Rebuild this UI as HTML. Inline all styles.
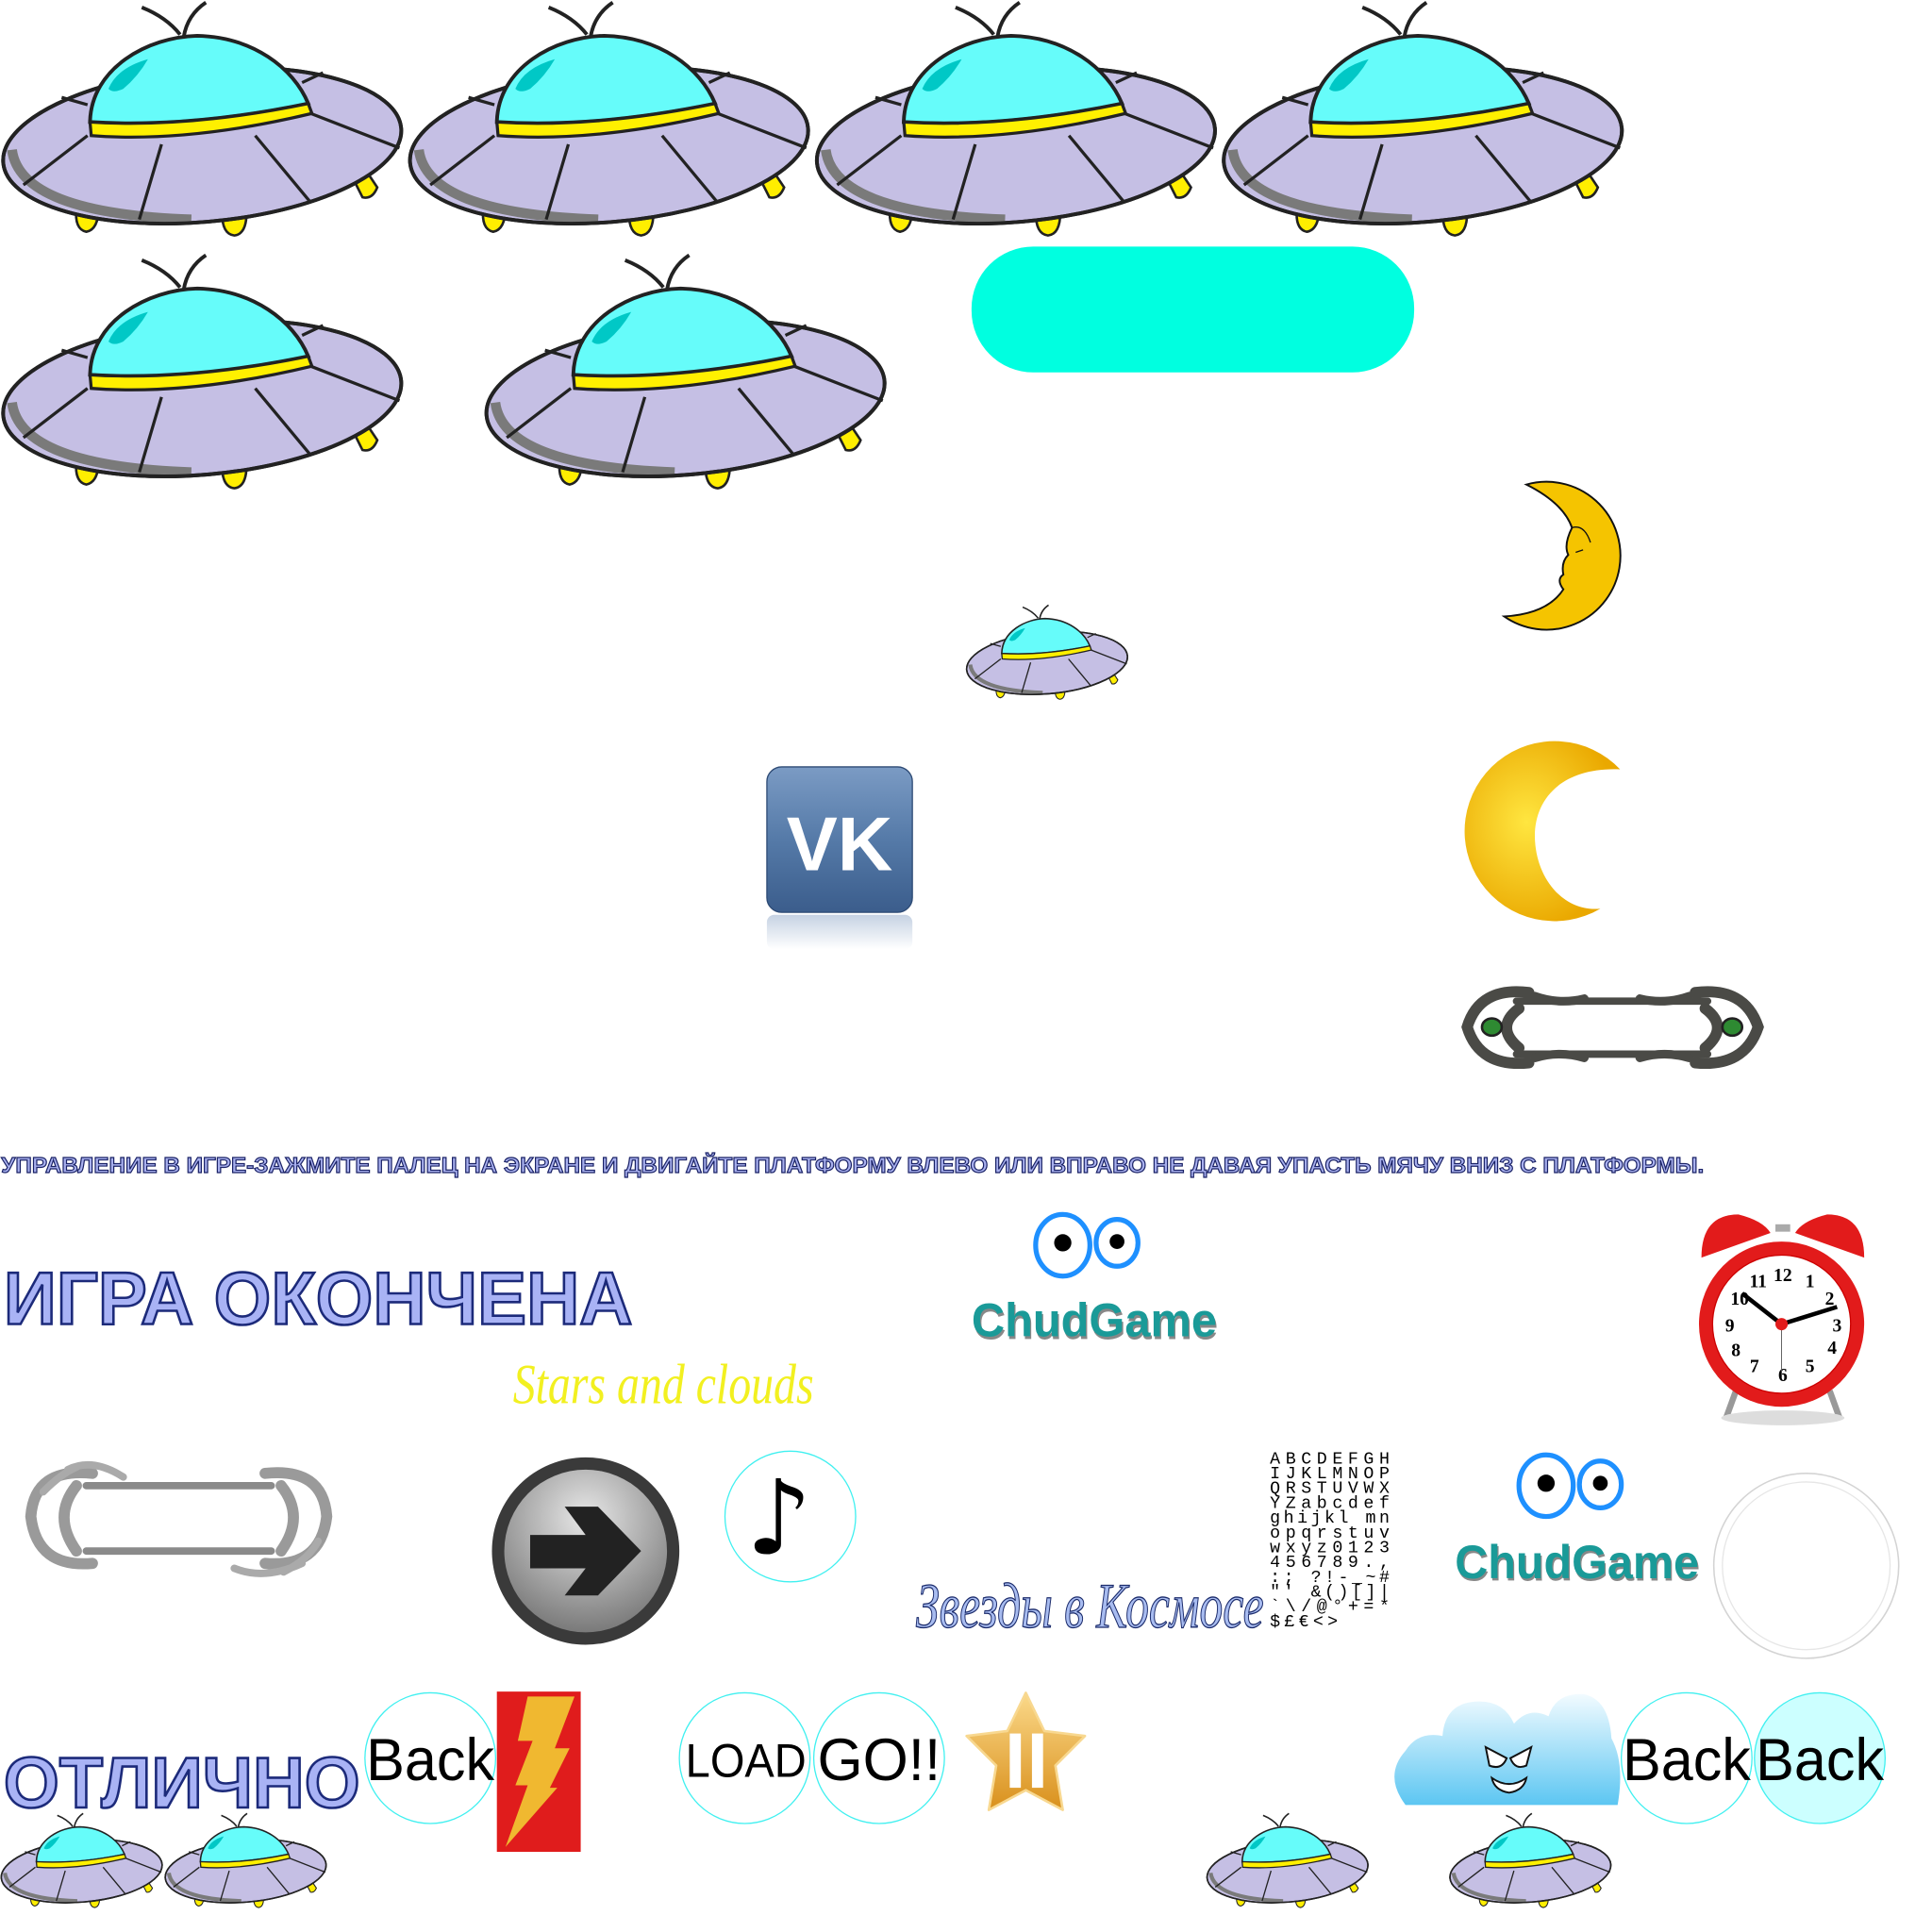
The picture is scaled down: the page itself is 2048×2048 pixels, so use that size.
<!DOCTYPE html>
<html><head><meta charset="utf-8"><style>
html,body{margin:0;padding:0;background:#fff;width:2048px;height:2048px;overflow:hidden}
svg{display:block}
</style></head><body>
<svg width="2048" height="2048" viewBox="0 0 1567 1567" xmlns="http://www.w3.org/2000/svg">
<defs>
<g id="ufo">
 <path d="M115,6 Q135,14 146,28" fill="none" stroke="#222" stroke-width="3"/>
 <path d="M167,2 Q152,12 149,30" fill="none" stroke="#222" stroke-width="3"/>
 <path d="M288,148 L298,140 L306,152 Q302,162 294,160 Z" fill="#ffee00" stroke="#222" stroke-width="2"/>
 <path d="M62,168 L80,168 Q80,186 70,188 Q60,186 62,168 Z" fill="#ffee00" stroke="#222" stroke-width="2"/>
 <path d="M180,172 L200,172 Q200,190 190,191 Q180,190 180,172 Z" fill="#ffee00" stroke="#222" stroke-width="2"/>
 <g transform="rotate(-5 164 118)">
  <ellipse cx="164" cy="118" rx="162" ry="62" fill="#c5bfe4" stroke="#222" stroke-width="3"/>
  <path d="M10,108 Q12,160 150,177" fill="none" stroke="#7a7a7a" stroke-width="8"/>
  <ellipse cx="164" cy="118" rx="162" ry="62" fill="none" stroke="#222" stroke-width="3"/>
 </g>
 <path d="M71,110 L19,150 M131,117 L113,178 M207,110 L251,163 M252,92 L324,120 M50,79 L71,85 M245,67 L262,59" stroke="#222" stroke-width="2.5" fill="none"/>
 <path d="M73,99 C74,55 120,30 160,29 C205,30 238,55 250,84 Q153,104 73,99 Z" fill="#66fcfa" stroke="#222" stroke-width="3"/>
 <path d="M88,72 Q95,55 120,48 Q112,62 100,72 Q92,76 88,72 Z" fill="#00c8c6"/>
 <path d="M73,99 Q153,104 250,84 L253,92 Q153,116 74,110 Z" fill="#fff000" stroke="#222" stroke-width="2.5"/>
</g>
<linearGradient id="vk" x1="0" y1="0" x2="0" y2="1"><stop offset="0" stop-color="#7b9bc4"/><stop offset="0.5" stop-color="#557aa8"/><stop offset="1" stop-color="#3b5d8c"/></linearGradient>
<linearGradient id="vkr" x1="0" y1="0" x2="0" y2="1"><stop offset="0" stop-color="#9fb4d0"/><stop offset="1" stop-color="#fff"/></linearGradient>
<radialGradient id="moon" cx="0.4" cy="0.45" r="0.6"><stop offset="0" stop-color="#ffe640"/><stop offset="1" stop-color="#eaa800"/></radialGradient>
<radialGradient id="btn" cx="0.5" cy="0.3" r="0.7"><stop offset="0" stop-color="#e8e8e8"/><stop offset="1" stop-color="#7a7a7a"/></radialGradient>
<linearGradient id="cloud" x1="0" y1="0" x2="0" y2="1"><stop offset="0" stop-color="#f2fbff"/><stop offset="1" stop-color="#5cc6f2"/></linearGradient>
<linearGradient id="star" x1="0" y1="0" x2="0" y2="1"><stop offset="0" stop-color="#fbd98a"/><stop offset="1" stop-color="#d9901c"/></linearGradient>
</defs>

<use href="#ufo" x="0" y="0"/>
<use href="#ufo" x="330" y="0"/>
<use href="#ufo" x="660" y="0"/>
<use href="#ufo" x="990" y="0"/>
<use href="#ufo" x="0" y="205"/>
<use href="#ufo" x="392" y="205"/>
<use href="#ufo" transform="translate(783,490) scale(0.404)"/>
<use href="#ufo" transform="translate(0,1470) scale(0.404)"/>
<use href="#ufo" transform="translate(133,1470) scale(0.404)"/>
<use href="#ufo" transform="translate(978,1470) scale(0.404)"/>
<use href="#ufo" transform="translate(1175,1470) scale(0.404)"/>

<rect x="788" y="200" width="359" height="102" rx="50" fill="#00ffe0"/>

<!-- moon with face -->
<path d="M1238,393 A60,60 0 1 1 1220,500 Q1255,498 1268,478 Q1262,470 1268,466 Q1266,456 1272,450 Q1268,442 1275,428 Q1268,408 1238,393 Z" fill="#f5c400" stroke="#111" stroke-width="1.5"/>
<path d="M1275,428 Q1285,425 1290,440 M1278,448 L1284,446" fill="none" stroke="#111" stroke-width="1"/>

<!-- moon 2 -->
<path d="M1314,624 A73,73 0 1 0 1298,737 C1270,740 1247,715 1245,682 C1243,650 1265,622 1314,624 Z" fill="url(#moon)"/>

<!-- VK -->
<rect x="622" y="622" width="118" height="118" rx="12" fill="url(#vk)" stroke="#2d4a74" stroke-width="1"/>
<rect x="622" y="742" width="118" height="28" rx="6" fill="url(#vkr)" opacity="0.6"/>
<text x="681" y="706" font-family="Liberation Sans, sans-serif" font-weight="bold" font-size="62" fill="#fff" text-anchor="middle">VK</text>

<!-- dark frame -->
<g fill="none" stroke="#4a4a46" stroke-width="9" stroke-linecap="round">
 <path d="M1230,812 L1385,812 M1230,855 L1385,855" stroke-width="6"/>
 <path d="M1240,805 Q1200,800 1190,833 Q1200,866 1240,862 M1232,818 Q1212,833 1232,850"/>
 <path d="M1375,805 Q1415,800 1426,833 Q1415,866 1375,862 M1383,818 Q1403,833 1383,850"/>
 <path d="M1245,808 Q1265,815 1285,810 M1245,858 Q1265,852 1285,858 M1330,810 Q1350,815 1370,808 M1330,858 Q1350,852 1370,858" stroke-width="7"/>
</g>
<ellipse cx="1210" cy="833" rx="8" ry="7" fill="#2e8a32" stroke="#222" stroke-width="2"/>
<ellipse cx="1405" cy="833" rx="8" ry="7" fill="#2e8a32" stroke="#222" stroke-width="2"/>

<!-- instruction line -->
<text x="1" y="951" font-family="Liberation Sans, sans-serif" font-weight="bold" font-size="18" fill="#a8b0ee" stroke="#1a2266" stroke-width="0.9" textLength="1381" lengthAdjust="spacingAndGlyphs">УПРАВЛЕНИЕ В ИГРЕ-ЗАЖМИТЕ ПАЛЕЦ НА ЭКРАНЕ И ДВИГАЙТЕ ПЛАТФОРМУ ВЛЕВО ИЛИ ВПРАВО НЕ ДАВАЯ УПАСТЬ МЯЧУ ВНИЗ С ПЛАТФОРМЫ.</text>

<text x="3" y="1074" font-family="Liberation Sans, sans-serif" font-weight="bold" font-size="60" fill="#a9b3f5" stroke="#1c2a7a" stroke-width="2" textLength="510" lengthAdjust="spacingAndGlyphs">ИГРА ОКОНЧЕНА</text>

<!-- eyes 1 -->
<ellipse cx="862" cy="1010" rx="22" ry="25" fill="#fff" stroke="#1e90ff" stroke-width="4"/>
<ellipse cx="906" cy="1008" rx="17" ry="19" fill="#fff" stroke="#1e90ff" stroke-width="4"/>
<circle cx="862" cy="1008" r="7" fill="#000"/><circle cx="906" cy="1007" r="6" fill="#000"/>
<text x="789" y="1086" font-family="Liberation Sans, sans-serif" font-weight="bold" font-size="38" fill="#888" textLength="199" lengthAdjust="spacingAndGlyphs">ChudGame</text>
<text x="788" y="1084" font-family="Liberation Sans, sans-serif" font-weight="bold" font-size="38" fill="#1a9a98" textLength="199" lengthAdjust="spacingAndGlyphs">ChudGame</text>

<!-- clock -->
<path d="M1400,1150 L1408,1128 M1492,1150 L1484,1128" stroke="#999" stroke-width="5"/>
<ellipse cx="1446" cy="1150" rx="50" ry="6" fill="#ddd"/>
<path d="M1380,1020 Q1380,985 1410,985 Q1430,990 1436,1000 Z" fill="#e21b1b"/>
<path d="M1512,1020 Q1512,985 1482,985 Q1462,990 1456,1000 Z" fill="#e21b1b"/>
<rect x="1440" y="993" width="12" height="6" fill="#aaa"/>
<circle cx="1445" cy="1074" r="67" fill="#e21b1b"/>
<circle cx="1445" cy="1074" r="56" fill="#fff" stroke="#c00" stroke-width="1"/>
<g font-family="Liberation Serif, serif" font-weight="bold" font-size="15" fill="#000" text-anchor="middle">
<text x="1446" y="1039">12</text><text x="1426" y="1044">11</text><text x="1468" y="1044">1</text>
<text x="1411" y="1058">10</text><text x="1484" y="1058">2</text><text x="1403" y="1080">9</text><text x="1490" y="1080">3</text>
<text x="1408" y="1100">8</text><text x="1486" y="1098">4</text><text x="1423" y="1113">7</text><text x="1446" y="1120">6</text><text x="1468" y="1113">5</text></g>
<path d="M1445,1074 L1413,1049 M1445,1074 L1490,1060" stroke="#000" stroke-width="3.5"/>
<line x1="1445" y1="1074" x2="1445" y2="1118" stroke="#555" stroke-width="0.7"/>
<circle cx="1445" cy="1074" r="5" fill="#e21b1b"/>

<text x="416" y="1138" font-family="Liberation Serif, serif" font-style="italic" font-size="46" fill="#f2f020" textLength="244" lengthAdjust="spacingAndGlyphs">Stars and clouds</text>

<!-- silver frame -->
<g fill="none" stroke-linecap="round">
 <path d="M70,1205 L220,1205 M70,1258 L220,1258" stroke="#8a8a8a" stroke-width="6"/>
 <path d="M75,1195 Q28,1190 25,1230 Q30,1272 75,1268 M62,1205 Q42,1230 62,1258" stroke="#9a9a9a" stroke-width="9"/>
 <path d="M215,1195 Q262,1190 265,1230 Q260,1272 215,1268 M228,1205 Q248,1230 228,1258" stroke="#9a9a9a" stroke-width="9"/>
 <path d="M55,1192 Q75,1182 100,1198 M190,1272 Q215,1282 245,1268 M35,1210 Q50,1195 62,1190 M230,1275 Q250,1265 258,1250" stroke="#aaa" stroke-width="6"/>
</g>

<!-- arrow button -->
<circle cx="475" cy="1258" r="76" fill="#3a3a3a"/>
<circle cx="475" cy="1258" r="66" fill="url(#btn)"/>
<path d="M430,1245 L475,1245 L458,1222 L485,1222 L520,1258 L485,1294 L458,1294 L475,1272 L430,1272 Z" fill="#222"/>

<!-- note -->
<circle cx="641" cy="1230" r="53" fill="#fff" stroke="#40f0f0" stroke-width="1"/>
<text x="605" y="1260" font-family="DejaVu Sans, sans-serif" font-size="84" fill="#000">♪</text>

<text x="743" y="1320" font-family="Liberation Serif, serif" font-style="italic" font-size="52" fill="#a8bcf0" stroke="#1a2a6a" stroke-width="1" textLength="282" lengthAdjust="spacingAndGlyphs">Звезды в Космосе</text>

<!-- font atlas -->
<g font-family="Liberation Mono, monospace" font-size="14" fill="#000">
<text x="1030" y="1187" textLength="97">ABCDEFGH</text>
<text x="1030" y="1199" textLength="97">IJKLMNOP</text>
<text x="1030" y="1211" textLength="97">QRSTUVWX</text>
<text x="1030" y="1223" textLength="97">YZabcdef</text>
<text x="1030" y="1235" textLength="97">ghijkl mn</text>
<text x="1030" y="1247" textLength="97">opqrstuv</text>
<text x="1030" y="1259" textLength="97">wxyz0123</text>
<text x="1030" y="1271" textLength="97">456789.,</text>
<text x="1030" y="1283" textLength="97">:; ?!-_~#</text>
<text x="1030" y="1295" textLength="97">"' &amp;()[]|</text>
<text x="1030" y="1307" textLength="97">`\/@°+=*</text>
<text x="1030" y="1319" textLength="55">$£€&lt;&gt;</text>
</g>

<!-- eyes 2 -->
<ellipse cx="1254" cy="1205" rx="22" ry="25" fill="#fff" stroke="#1e90ff" stroke-width="4"/>
<ellipse cx="1298" cy="1204" rx="17" ry="19" fill="#fff" stroke="#1e90ff" stroke-width="4"/>
<circle cx="1254" cy="1203" r="7" fill="#000"/><circle cx="1298" cy="1203" r="6" fill="#000"/>
<text x="1181" y="1282" font-family="Liberation Sans, sans-serif" font-weight="bold" font-size="38" fill="#888" textLength="198" lengthAdjust="spacingAndGlyphs">ChudGame</text>
<text x="1180" y="1280" font-family="Liberation Sans, sans-serif" font-weight="bold" font-size="38" fill="#1a9a98" textLength="198" lengthAdjust="spacingAndGlyphs">ChudGame</text>

<circle cx="1465" cy="1270" r="75" fill="none" stroke="#d4d4d4" stroke-width="1.2"/>
<circle cx="1465" cy="1270" r="68" fill="none" stroke="#e6e6e6" stroke-width="1"/>

<text x="3" y="1466" font-family="Liberation Sans, sans-serif" font-weight="bold" font-size="58" fill="#a9b3f5" stroke="#1c2a7a" stroke-width="2" textLength="289" lengthAdjust="spacingAndGlyphs">ОТЛИЧНО</text>

<!-- circles with text -->
<g fill="#fff" stroke="#40f0f0" stroke-width="1">
<circle cx="349" cy="1426" r="53"/><circle cx="604" cy="1426" r="53"/><circle cx="713" cy="1426" r="53"/>
<circle cx="1368" cy="1426" r="53"/><circle cx="1476" cy="1426" r="53" fill="#ccffff"/>
</g>
<g font-family="Liberation Sans, sans-serif" font-size="48" fill="#000">
<text x="297" y="1444" textLength="104" lengthAdjust="spacingAndGlyphs">Back</text>
<text x="556" y="1441" font-size="38" textLength="98" lengthAdjust="spacingAndGlyphs">LOAD</text>
<text x="663" y="1444" textLength="100" lengthAdjust="spacingAndGlyphs">GO!!</text>
<text x="1316" y="1444" textLength="104" lengthAdjust="spacingAndGlyphs">Back</text>
<text x="1424" y="1444" textLength="104" lengthAdjust="spacingAndGlyphs">Back</text>
</g>

<!-- lightning -->
<rect x="403" y="1372" width="68" height="130" fill="#e01c1c"/>
<path d="M428,1376 L466,1376 L450,1418 L462,1418 L446,1450 L452,1450 L410,1498 L428,1448 L418,1448 L432,1412 L420,1412 Z" fill="#f0b830"/>

<!-- star -->
<path d="M832,1373 L847,1404 L880,1408 L856,1432 L862,1468 L832,1452 L802,1468 L808,1432 L784,1408 L817,1404 Z" fill="url(#star)" stroke="#f8d890" stroke-width="2" stroke-linejoin="round"/>
<rect x="819" y="1406" width="9" height="44" fill="#fff"/><rect x="837" y="1406" width="9" height="44" fill="#fff"/>

<!-- cloud -->
<path d="M1140,1464 Q1122,1440 1140,1420 Q1150,1404 1170,1408 Q1172,1380 1200,1380 Q1220,1380 1228,1398 Q1240,1384 1256,1392 Q1262,1373 1284,1374 Q1305,1378 1307,1410 Q1318,1430 1312,1464 Z" fill="url(#cloud)"/>
<path d="M1205,1417 L1222,1426 Q1218,1436 1208,1432 Z M1242,1417 L1225,1426 Q1229,1436 1238,1432 Z" fill="#fff" stroke="#111" stroke-width="1.5"/>
<path d="M1210,1442 Q1224,1452 1238,1442 Q1236,1452 1224,1454 Q1212,1452 1210,1442 Z" fill="#fff" stroke="#111" stroke-width="1.5"/>
</svg>
</body></html>
